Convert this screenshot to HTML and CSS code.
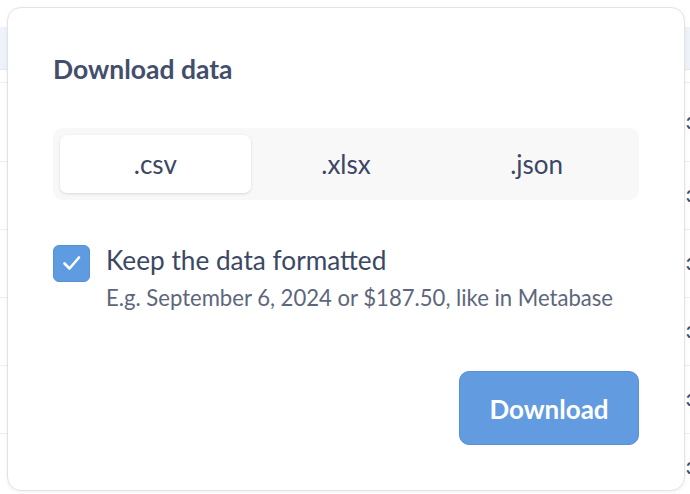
FILE: index.html
```html
<!DOCTYPE html>
<html lang="en">
<head>
<meta charset="utf-8">
<title>Download data</title>
<link rel="stylesheet" href="styles.css">
</head>
<body>
  <!-- table in the background, behind the popover -->
  <div class="table">
    <div class="table-head"></div>
    <div class="row first"><span class="cell">36</span></div>
    <div class="row"><span class="cell">35</span></div>
    <div class="row"><span class="cell">33</span></div>
    <div class="row"><span class="cell">32</span></div>
    <div class="row"><span class="cell">35</span></div>
    <div class="row"><span class="cell">33</span></div>
  </div>

  <div class="popover">
    <h2 class="title">Download data</h2>

    <div class="segmented">
      <div class="seg active">.csv</div>
      <div class="seg">.xlsx</div>
      <div class="seg">.json</div>
    </div>

    <div class="option">
      <span class="checkbox">
        <svg width="37" height="37" viewBox="0 0 37 37"><path d="M11.5 18.5 L16.5 23.5 L26 12.5" fill="none" stroke="#fff" stroke-width="2.6" stroke-linecap="round" stroke-linejoin="round"/></svg>
      </span>
      <div class="option-text">
        <div class="option-label">Keep the data formatted</div>
        <div class="option-hint">E.g. September 6, 2024 or $187.50, like in Metabase</div>
      </div>
    </div>

    <div class="actions">
      <button class="btn-primary">Download</button>
    </div>
  </div>
</body>
</html>
```

FILE: styles.css
```css
html, body {
  margin: 0;
  padding: 0;
  background: #ffffff;
  font-family: Lato, "Open Sans", sans-serif;
  width: 690px;
  height: 494px;
  overflow: hidden;
}

/* background table */
.table {
  padding-top: 27px;
}
.table-head {
  height: 42px;
  background: #eef3fa;
  border-bottom: 1px solid #e4e7ec;
  margin-bottom: 12px;
}
.row {
  height: 67px;
  border-top: 1px solid #eceef1;
  display: flex;
  align-items: center;
  justify-content: flex-end;
}
.row.first {
  height: 78px;
}
.cell {
  width: 16px;
  margin-right: -12px;
  font-weight: 700;
  font-size: 17px;
  color: #3f4a68;
}

/* popover */
.popover {
  position: absolute;
  left: 7px;
  top: 7px;
  width: 676px;
  height: 482px;
  background: #ffffff;
  border: 1px solid #e2e3e6;
  border-radius: 14px;
  box-shadow: 0 1px 4px rgba(0, 0, 0, 0.06);
  display: flex;
  flex-direction: column;
}
.popover > * {
  margin-left: 45px;
  margin-right: 45px;
}

.title {
  margin-top: 45px;
  margin-bottom: 43px;
  font-size: 26.5px;
  line-height: 32px;
  font-weight: 700;
  color: #434e6c;
}

.segmented {
  height: 72px;
  box-sizing: border-box;
  padding: 7px;
  background: #f8f8f9;
  border-radius: 9px;
  display: grid;
  grid-template-columns: 1fr 1fr 1fr;
}
.seg {
  display: flex;
  align-items: center;
  justify-content: center;
  font-size: 26px;
  color: #3c4764;
  border-radius: 7px;
}
.seg.active {
  background: #ffffff;
  box-shadow: 0 1px 3px rgba(0, 0, 0, 0.13);
}

.option {
  margin-top: 45px;
  display: flex;
  gap: 16px;
}
.checkbox {
  width: 37px;
  height: 37px;
  flex: none;
  box-sizing: border-box;
  background: #5f9be0;
  border: 1px solid #5890d6;
  border-radius: 6px;
  display: flex;
}
.checkbox svg {
  margin: -1px;
}
.option-label {
  font-size: 26.2px;
  line-height: 30px;
  color: #3c4764;
}
.option-hint {
  margin-top: 10px;
  font-size: 22.1px;
  line-height: 26px;
  color: #5d667c;
}

.actions {
  margin-top: 60px;
  display: flex;
  justify-content: flex-end;
}
.btn-primary {
  width: 180px;
  height: 74px;
  font-family: Lato, "Open Sans", sans-serif;
  font-size: 26px;
  font-weight: 700;
  color: #ffffff;
  background: #629be0;
  border: 1px solid #5a8fd6;
  border-radius: 10px;
  padding: 2px 0 0;
}
```
